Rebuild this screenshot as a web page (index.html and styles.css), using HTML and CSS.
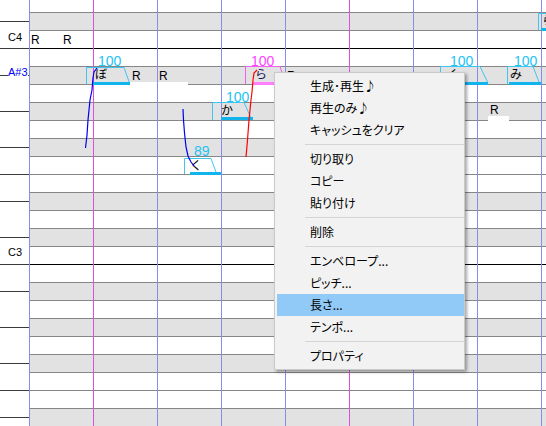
FILE: index.html
```html
<!DOCTYPE html>
<html>
<head>
<meta charset="utf-8">
<link rel="stylesheet" href="styles.css">
</head>
<body>
<div class="app">
  <div class="keys">
    <div class="key k-f"></div>
    <div class="key k-s"></div>
    <div class="key k-s"></div>
    <div class="key k-l"></div>
    <div class="key k-l"></div>
    <div class="key k-s"></div>
    <div class="key k-s"></div>
    <div class="key k-l"></div>
    <div class="key k-s"></div>
    <div class="key k-s"></div>
    <div class="key k-l"></div>
    <div class="key k-l"></div>
    <div class="key k-s"></div>
    <div class="key k-s"></div>
  </div>
  <div class="grid">
    <div class="rows">
      <div class="r"></div>
      <div class="r g"></div>
      <div class="r"></div>
      <div class="r b"></div>
      <div class="r g"></div>
      <div class="r"></div>
      <div class="r g"></div>
      <div class="r"></div>
      <div class="r g"></div>
      <div class="r"></div>
      <div class="r"></div>
      <div class="r g"></div>
      <div class="r"></div>
      <div class="r g"></div>
      <div class="r"></div>
      <div class="r b"></div>
      <div class="r g"></div>
      <div class="r"></div>
      <div class="r g"></div>
      <div class="r"></div>
      <div class="r g"></div>
      <div class="r"></div>
      <div class="r"></div>
      <div class="r g"></div>
    </div>
  </div>

  <svg class="canvas" width="546" height="426" viewBox="0 0 546 426">
    <!-- rest label backgrounds -->
    <rect x="130" y="82" width="58" height="8" fill="#fff"/>
    <rect x="488" y="116" width="21" height="8" fill="#fff"/>
    <!-- key name labels -->
    <text class="kn" x="8" y="41">C4</text>
    <rect x="8" y="66" width="20" height="12" fill="#fff"/>
    <text class="kn blue" x="8" y="76">A#3</text>
    <text class="kn" x="8" y="256">C3</text>
    <!-- vertical lines -->
    <g class="vl" stroke-width="1">
      <line x1="29.5" y1="0" x2="29.5" y2="426" stroke="#8a8af0"/>
      <line x1="93.5" y1="0" x2="93.5" y2="426" stroke="#e24ce2"/>
      <line x1="157.5" y1="0" x2="157.5" y2="426" stroke="#8a8af0"/>
      <line x1="221.5" y1="0" x2="221.5" y2="426" stroke="#8a8af0"/>
      <line x1="285.5" y1="0" x2="285.5" y2="426" stroke="#8a8af0"/>
      <line x1="349.5" y1="0" x2="349.5" y2="426" stroke="#e24ce2"/>
      <line x1="413.5" y1="0" x2="413.5" y2="426" stroke="#8a8af0"/>
      <line x1="477.5" y1="0" x2="477.5" y2="426" stroke="#8a8af0"/>
      <line x1="541.5" y1="0" x2="541.5" y2="426" stroke="#8a8af0"/>
    </g>
    <!-- rests -->
    <text class="rest" x="31" y="44">R</text>
    <text class="rest" x="63" y="44">R</text>
    <text class="rest" x="132" y="80">R</text>
    <text class="rest" x="159" y="80">R</text>
    <text class="rest" x="287" y="80">R</text>
    <text class="rest" x="490" y="114">R</text>

    <!-- notes (cyan) -->
    <g fill="none" stroke="#3ec6f2" stroke-width="1">
      <polyline points="86.5,84 86.5,67.5 124,67.5 129.5,83"/>
      <polyline points="212.5,120 212.5,102.5 244,102.5 251,118"/>
      <polyline points="184.5,174 184.5,158.5 211,158.5 216,172"/>
      <polyline points="440.5,84 440.5,66.5 480,66.5 488,83"/>
      <polyline points="507.5,84 507.5,66.5 533,66.5 539,82"/>
      <polyline points="538.5,30 538.5,13.5 552,13.5"/>
    </g>
    <g fill="#12b4ee">
      <rect x="93" y="82" width="37" height="3"/>
      <rect x="221" y="117" width="32" height="3"/>
      <rect x="190" y="172" width="31" height="3"/>
      <rect x="447" y="82" width="41" height="3"/>
      <rect x="509" y="82" width="32" height="3"/>
      <rect x="541" y="28" width="10" height="3"/>
    </g>
    <text class="vel" x="98" y="66">100</text>
    <text class="vel" x="226" y="102">100</text>
    <text class="vel" x="194" y="156">89</text>
    <text class="vel" x="450" y="66">100</text>
    <text class="vel" x="514" y="66">100</text>
    <text class="lyr" x="95" y="79">ぼ</text>
    <text class="lyr" x="221" y="115">か</text>
    <text class="lyr" x="190" y="170">く</text>
    <text class="lyr" x="447" y="79">く</text>
    <text class="lyr" x="510" y="79">み</text>
    <text class="lyr" x="542" y="25">ら</text>

    <!-- selected note (magenta) -->
    <polyline points="245.5,84 245.5,66.5 280,66.5 285,82" fill="none" stroke="#f060f0" stroke-width="1"/>
    <rect x="253" y="82" width="32" height="3" fill="#ff80ff"/>
    <text class="vel sel" x="251" y="66">100</text>
    <text class="lyr navy" x="255" y="79">ら</text>

    <!-- pitch curves -->
    <polyline points="97,68 94,72 93,78 92,90 90,100 88,120 87,135 85.5,148" fill="none" stroke="#0000f0" stroke-width="1.2"/>
    <polyline points="183,109 183.5,120 184.5,133 186,147 188,156 191,162 194,166" fill="none" stroke="#0000f0" stroke-width="1.2"/>
    <polyline points="257,70 254,73 253,80 252,92 251,100 249,120 247.5,140 246,157" fill="none" stroke="#ff0000" stroke-width="1.2"/>
  </svg>

  <div class="menu">
    <div class="mi">生成･再生♪</div>
    <div class="mi">再生のみ♪</div>
    <div class="mi">キャッシュをクリア</div>
    <div class="sep"></div>
    <div class="mi">切り取り</div>
    <div class="mi">コピー</div>
    <div class="mi">貼り付け</div>
    <div class="sep"></div>
    <div class="mi">削除</div>
    <div class="sep"></div>
    <div class="mi">エンベロープ...</div>
    <div class="mi">ピッチ...</div>
    <div class="mi hl">長さ...</div>
    <div class="mi">テンポ...</div>
    <div class="sep"></div>
    <div class="mi">プロパティ</div>
  </div>
</div>
</body>
</html>
```

FILE: styles.css
```css
html, body {
  margin: 0;
  padding: 0;
  background: #fff;
}

.app {
  position: relative;
  width: 546px;
  height: 426px;
  overflow: hidden;
  display: flex;
  font-family: "Liberation Sans", Arial, sans-serif;
}

.keys {
  width: 29px;
  flex: none;
  display: flex;
  flex-direction: column;
  background: #fff;
}

.key {
  flex: none;
  border-bottom: 1px solid #3a3a3a;
}

.k-f { height: 21px; }
.k-s { height: 26px; }
.k-l { height: 35px; }

.grid {
  flex: 1;
  overflow: hidden;
}

.rows {
  margin-top: -6px;
  display: flex;
  flex-direction: column;
}

.r {
  height: 18px;
  box-sizing: border-box;
  border-top: 1px solid #868686;
  background: #fff;
}

.r.g {
  background-color: #e2e2e2;
}

.r.b {
  border-top-color: #000;
}

.canvas {
  position: absolute;
  left: 0;
  top: 0;
}

.kn {
  font-family: "Liberation Sans", Arial, sans-serif;
  font-size: 11px;
  fill: #000;
}

.kn.blue {
  fill: #0000ff;
}

.rest {
  font-family: "Liberation Sans", Arial, sans-serif;
  font-size: 12px;
  fill: #000;
}

.vel {
  font-family: "Liberation Sans", Arial, sans-serif;
  font-size: 14px;
  fill: #22c2f4;
}

.vel.sel {
  fill: #ff44ff;
}

.lyr {
  font-family: "Noto Sans CJK JP", sans-serif;
  font-size: 12px;
  fill: #000;
}

.lyr.navy {
  fill: #141450;
}

.menu {
  position: absolute;
  left: 274px;
  top: 72px;
  width: 191px;
  box-sizing: border-box;
  border: 1px solid #cacaca;
  background: #f2f2f2;
  padding: 2px 0 2px 2px;
  box-shadow: 2px 2px 3px rgba(0, 0, 0, 0.35);
  font-family: "Noto Sans CJK JP", sans-serif;
  font-size: 12px;
  font-feature-settings: "palt";
  color: #000;
}

.mi {
  height: 22px;
  line-height: 22px;
  padding-left: 33px;
  white-space: nowrap;
}

.mi.hl {
  background: #91c9f7;
}

.sep {
  height: 7px;
  position: relative;
}

.sep::after {
  content: "";
  position: absolute;
  left: 28px;
  right: 0;
  top: 3px;
  height: 1px;
  background: #d5d5d5;
}
```
